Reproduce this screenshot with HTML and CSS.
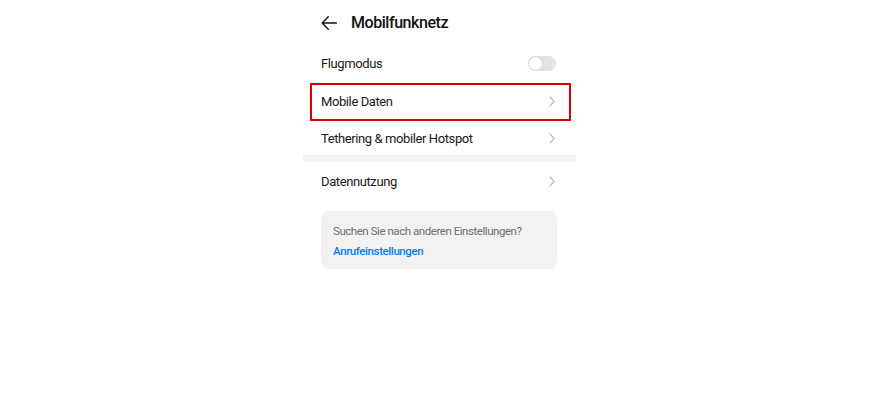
FILE: index.html
```html
<!DOCTYPE html>
<html lang="de">
<head>
<meta charset="utf-8">
<link rel="stylesheet" href="styles.css">
</head>
<body>
<div class="page">
  <div class="header">
    <svg class="back" width="16" height="14" viewBox="0 0 16 14"><path d="M15.5 7H1.2M7.3 0.8L1.2 7l6.1 6.2" fill="none" stroke="#111" stroke-width="1.4" stroke-linecap="round" stroke-linejoin="round"/></svg>
    <span class="title">Mobilfunknetz</span>
  </div>
  <div class="row r1">
    <span class="label">Flugmodus</span>
    <span class="toggle"><span class="knob"></span></span>
  </div>
  <div class="row r2 highlighted">
    <span class="label">Mobile Daten</span>
    <svg class="chev" width="6" height="11" viewBox="0 0 6 11"><path d="M0.7 0.7L5.2 5.5L0.7 10.3" fill="none" stroke="#b8b8b8" stroke-width="1.2"/></svg>
  </div>
  <div class="row r3">
    <span class="label">Tethering &amp; mobiler Hotspot</span>
    <svg class="chev" width="6" height="11" viewBox="0 0 6 11"><path d="M0.7 0.7L5.2 5.5L0.7 10.3" fill="none" stroke="#b8b8b8" stroke-width="1.2"/></svg>
  </div>
  <div class="sep"></div>
  <div class="row r4">
    <span class="label">Datennutzung</span>
    <svg class="chev" width="6" height="11" viewBox="0 0 6 11"><path d="M0.7 0.7L5.2 5.5L0.7 10.3" fill="none" stroke="#b8b8b8" stroke-width="1.2"/></svg>
  </div>
  <div class="card">
    <div class="hint">Suchen Sie nach anderen Einstellungen?</div>
    <div class="link">Anrufeinstellungen</div>
  </div>
</div>
</body>
</html>
```
FILE: styles.css
```css
html, body { margin: 0; padding: 0; background: #fff; }
body { font-family: Roboto, "Noto Sans", sans-serif; color: #1a1a1a; letter-spacing: -0.4px; }
.page { width: 273px; margin: 0 auto; }
.header { height: 45px; display: flex; align-items: center; padding: 0 18px; box-sizing: border-box; gap: 14px; }
.back { display: block; }
.title { font-size: 16px; font-weight: 500; color: #111; letter-spacing: -0.45px; }
.row { display: flex; align-items: center; justify-content: space-between; padding: 0 21px 0 18px; box-sizing: border-box; position: relative; }
.label { font-size: 13px; color: #1a1a1a; }
.r1 { height: 37px; padding-right: 20px; }
.r2 { height: 39px; }
.r3 { height: 34px; }
.r4 { height: 38px; }
.highlighted::after { content: ""; position: absolute; left: 7px; right: 5px; top: 1px; bottom: 0; border: 2px solid #d90000; }
.chev { display: block; }
.sep { height: 7px; background: #f3f3f3; }
.toggle { width: 28px; height: 15px; border-radius: 8px; background: #e3e3e3; position: relative; }
.knob { position: absolute; left: 1px; top: 1px; width: 13px; height: 13px; border-radius: 50%; background: #fff; box-shadow: 0 0 0 0.5px #cfcfcf; }
.card { margin: 11px 19px 0 18px; background: #f2f2f2; border-radius: 8px; padding: 12px 12px 10px; height: 58px; box-sizing: border-box; }
.hint { font-size: 11.5px; color: #6e6e6e; line-height: 16px; letter-spacing: -0.45px; }
.link { font-size: 11.5px; color: #0a7bf5; font-weight: 500; margin-top: 4px; line-height: 16px; }
```
